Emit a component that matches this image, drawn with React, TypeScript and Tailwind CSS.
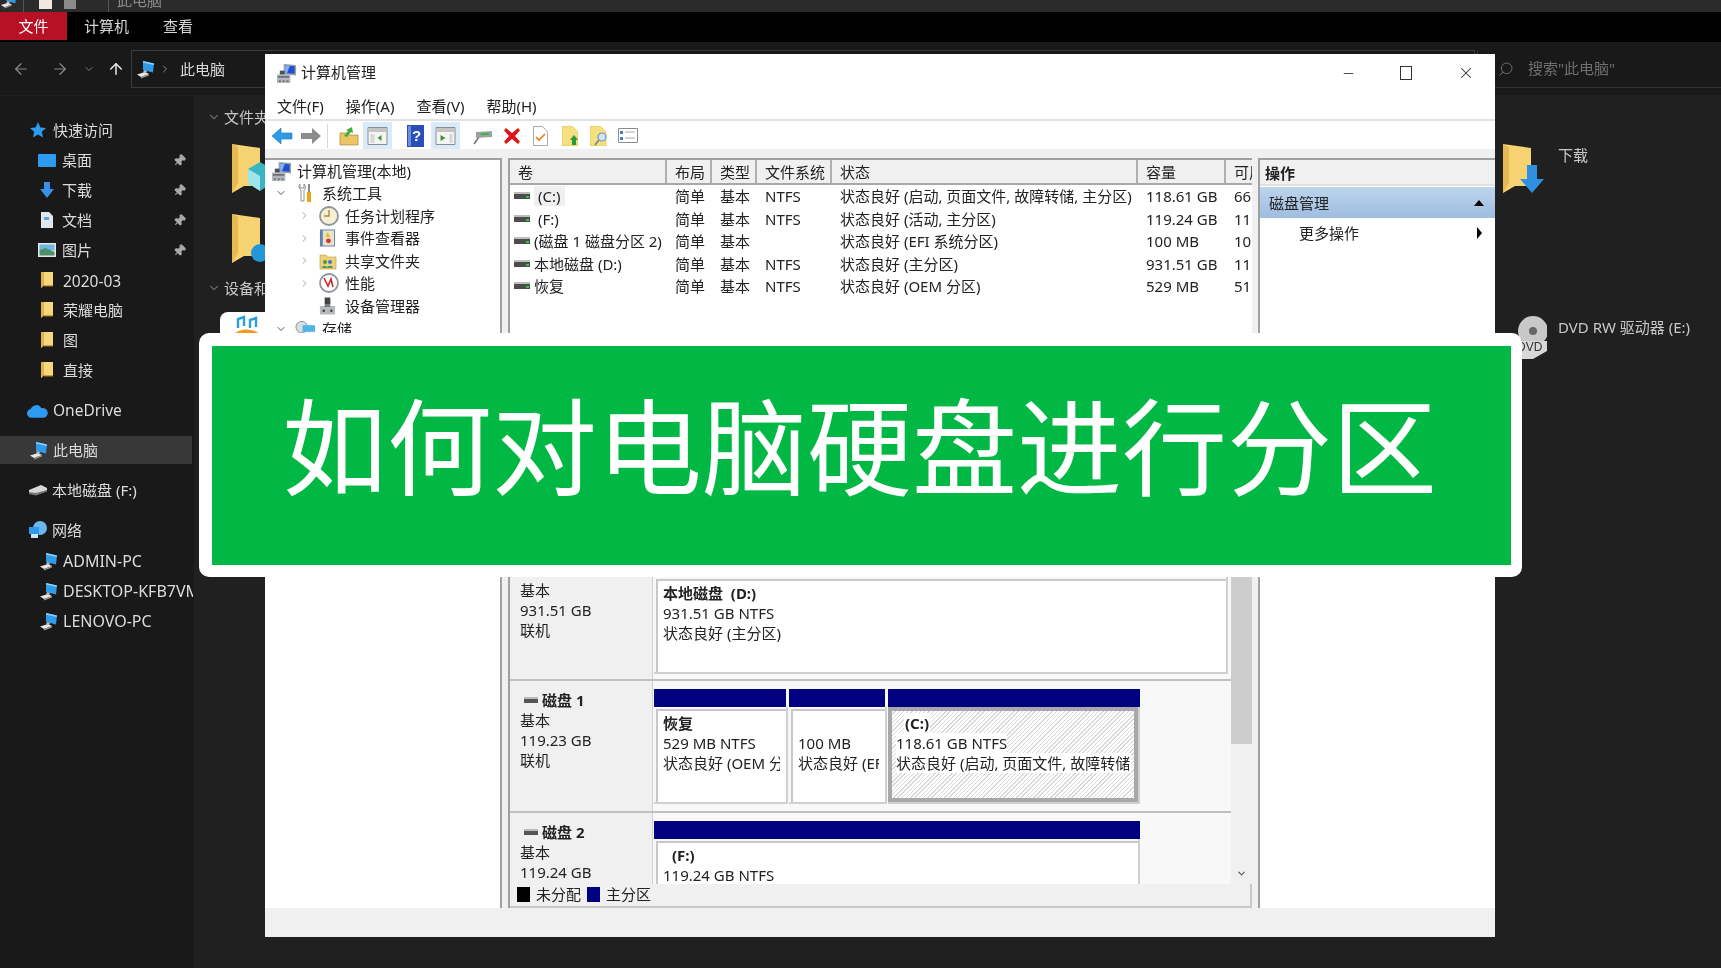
import { ChevronDown, ChevronRight, ArrowLeft, ArrowRight, ArrowUp, Search, Pin, Minus, X } from 'lucide-react'

const ThisPc = ({ className = 'w-[20px] h-[20px]' }: { className?: string }) => (
  <svg viewBox="0 0 20 20" className={className}>
    <path d="M7 2l11 2.5-1 9L7 11z" fill="#2f9be8" />
    <path d="M7 2l11 2.5-.3 1.5L7 3.6z" fill="#8fd0f8" />
    <path d="M1 15.5l8-2.5 4 2-8 3z" fill="#e8e8e8" />
    <path d="M5 18l8-3v1.4L5 19.5z" fill="#9a9a9a" />
    <path d="M8 11l-1 2.4 3 .6 1-2z" fill="#bbb" />
  </svg>
)

const SmallFolder = () => (
  <svg viewBox="0 0 14 18" className="w-[14px] h-[18px]">
    <path d="M1 1h12v13H4l-3 3z" fill="#f7d67c" />
    <path d="M1 1h3v13l-3 3z" fill="#e0b24e" />
    <path d="M4 14h9v1.4H4z" fill="#c99a3c" />
  </svg>
)

const BigFolder = ({ badge }: { badge: 'cube' | 'music' | 'down' }) => (
  <svg viewBox="0 0 48 52" className="w-[48px] h-[52px] shrink-0">
    <path d="M2 1l28 4v38H14L2 50z" fill="#f6d372" />
    <path d="M2 1l6 3v36l-6 10z" fill="#e7b955" />
    {badge === 'cube' && <path d="M18 26l12-7 12 7v14l-12 8-12-8z" fill="#38b6c4" />}
    {badge === 'cube' && <path d="M18 26l12 7v15l-12-8z" fill="#9fe4ea" />}
    {badge === 'music' && <circle cx="30" cy="40" r="9" fill="#2596d8" />}
    {badge === 'down' && <path d="M26 22h10v14h7L31 50 19 36h7z" fill="#2f8fe0" />}
  </svg>
)

const Drive = () => (
  <svg viewBox="0 0 16 8" className="w-[16px] h-[8px] shrink-0">
    <path d="M0 1h16v6H0z" fill="#4c4c4c" />
    <path d="M0 0h16v2H0z" fill="#bdbdbd" />
    <path d="M12 4h3v2h-3z" fill="#3cc43c" />
  </svg>
)

const MgmtIcon = () => (
  <svg viewBox="0 0 22 22" className="w-[21px] h-[21px] shrink-0">
    <path d="M8 1l13 1v11l-13-1z" fill="#9aa0a8" />
    <path d="M9.5 2.5l10 .8v8l-10-.8z" fill="#1f4fd0" />
    <path d="M9.5 2.5l5 .4-3 8-2-.2z" fill="#7fb0f0" />
    <path d="M1 12h14v9H1z" fill="#b4b8bc" />
    <path d="M2 13.5h12v2H2zM3 18h2v2H3zM7 18h2v2H7zM11 18h2v2h-2z" fill="#6b7075" />
    <path d="M4 8h5v4H4z" fill="#4a5058" />
  </svg>
)

const ToolsIcon = () => (
  <svg viewBox="0 0 16 20" className="w-[16px] h-[20px] shrink-0">
    <path d="M3 1C1 3 2 6 4 7v11h3V7c2-1 2-4 0-6v4H3z" fill="#fff" stroke="#777" strokeWidth="0.8" />
    <path d="M11 1h2v8h-2z" fill="#888" />
    <path d="M10 9h4v10h-4z" fill="#eaa515" />
  </svg>
)

const ClockIcon = () => (
  <svg viewBox="0 0 20 20" className="w-[20px] h-[20px] shrink-0">
    <circle cx="10" cy="10" r="9" fill="#f5efd5" stroke="#8f959b" strokeWidth="1.8" />
    <path d="M10 4v6H5" fill="none" stroke="#b08a30" strokeWidth="1.4" />
  </svg>
)

const EventIcon = () => (
  <svg viewBox="0 0 18 20" className="w-[17px] h-[20px] shrink-0">
    <path d="M1 1h16v18H1z" fill="#5f7fb0" />
    <path d="M4 2h12v16H4z" fill="#e8e2c8" />
    <path d="M9 4l3 5H7z" fill="#e8b820" />
    <circle cx="10" cy="13" r="2.6" fill="#d0343a" />
  </svg>
)

const ShareIcon = () => (
  <svg viewBox="0 0 18 18" className="w-[18px] h-[18px] shrink-0">
    <path d="M1 3h6l1 2h9v12H1z" fill="#efd078" stroke="#b99840" strokeWidth="0.6" />
    <circle cx="6" cy="10" r="2" fill="#3e9a4a" />
    <circle cx="11" cy="10" r="2" fill="#3f78c8" />
    <path d="M3 16c0-3 5-3 5 0zM8 16c0-3 6-3 6 0z" fill="#4a9a5a" />
  </svg>
)

const PerfIcon = () => (
  <svg viewBox="0 0 20 20" className="w-[20px] h-[20px] shrink-0">
    <circle cx="10" cy="10" r="9" fill="#fff" stroke="#8f959b" strokeWidth="1.8" />
    <path d="M5 5l4 8 3-7 2 8" fill="none" stroke="#d02828" strokeWidth="1.6" />
  </svg>
)

const DeviceIcon = () => (
  <svg viewBox="0 0 18 20" className="w-[17px] h-[20px] shrink-0">
    <path d="M6 1h6v7H6z" fill="#444" />
    <path d="M1 10h16v9H1z" fill="#b6babd" />
    <path d="M6 8h6v3H6z" fill="#777" />
    <circle cx="5" cy="15" r="1.4" fill="#444" />
    <circle cx="13" cy="15" r="1.4" fill="#444" />
  </svg>
)

const StoreIcon = () => (
  <svg viewBox="0 0 22 18" className="w-[21px] h-[18px] shrink-0">
    <circle cx="7" cy="7" r="6" fill="#d8dde0" stroke="#8a9096" />
    <path d="M8 5h13v7H8z" fill="#4fb5e8" />
    <path d="M2 13h14v5H2z" fill="#b0b4b8" />
  </svg>
)

function Explorer() {
  const sideText = 'text-[15px] text-[#dcdcdc]'
  const pinned = [
    { name: '桌面', icon: <span className="w-[18px] h-[13px] bg-[#2d9bf0] rounded-[1px]" /> },
    { name: '下载', icon: <svg viewBox="0 0 16 18" className="w-[16px] h-[18px]"><path d="M5 1h6v7h4l-7 9-7-9h4z" fill="#3a90e8" /></svg> },
    { name: '文档', icon: <svg viewBox="0 0 14 18" className="w-[14px] h-[18px]"><path d="M1 1h8l4 4v12H1z" fill="#dfe6ec" /><path d="M4 6h5v3H4z" fill="#5aa8e0" /></svg> },
    { name: '图片', icon: <svg viewBox="0 0 18 14" className="w-[18px] h-[14px]"><path d="M0 0h18v14H0z" fill="#e6e6e6" /><path d="M1.5 1.5h15v6h-15z" fill="#6fb6e6" /><path d="M1.5 7l6-2 9 4v3.5h-15z" fill="#4f8f6a" /></svg> },
  ]
  return (
    <div className="absolute inset-0 flex flex-col bg-[#191919]">
      <div className="h-[12px] bg-[#2b2b2b] overflow-hidden flex items-start shrink-0">
        <ThisPc className="w-[18px] h-[18px] -mt-[9px] shrink-0" />
        <span className="w-[1px] h-[12px] bg-[#555] ml-[5px]" />
        <span className="w-[13px] h-[9px] bg-[#f0e8e0] ml-[15px]" />
        <span className="w-[12px] h-[9px] bg-[#8a8a8a] ml-[12px]" />
        <span className="w-[1px] h-[12px] bg-[#555] ml-[32px]" />
        <span className="text-[15px] leading-[20px] text-[#8a8a8a] ml-[8px] -mt-[10px]">此电脑</span>
      </div>
      <div className="h-[30px] bg-black flex text-[15px] text-[#d8d8d8] shrink-0">
        <div className="w-[67px] h-[28px] pt-[1px] bg-[#b81024] text-white flex items-center justify-center">文件</div>
        <div className="ml-[17px] h-[28px] pt-[1px] flex items-center">计算机</div>
        <div className="ml-[34px] h-[28px] pt-[1px] flex items-center">查看</div>
      </div>
      <div className="h-[54px] flex items-start shrink-0 border-b border-[#202020]">
        <div className="flex items-center h-[38px] mt-[8px] text-[#8a8a8a]">
          <ArrowLeft className="ml-[12px] w-[18px] h-[18px]" strokeWidth={1.6} />
          <ArrowRight className="ml-[21px] w-[18px] h-[18px]" strokeWidth={1.6} />
          <ChevronDown className="ml-[14px] w-[12px] h-[12px]" strokeWidth={1.8} />
          <ArrowUp className="ml-[12px] w-[18px] h-[18px] text-[#e8e8e8]" strokeWidth={2} />
        </div>
        <div className="ml-[6px] mt-[8px] h-[38px] flex-1 border border-[#3a3a3a] flex items-center pl-[4px] text-[15px] text-[#d8d8d8]">
          <ThisPc />
          <ChevronRight className="ml-[3px] w-[12px] h-[12px] text-[#888]" />
          <span className="ml-[9px]">此电脑</span>
        </div>
        <div className="ml-[2px] mt-[8px] w-[244px] h-[38px] border-l border-b border-[#333] flex items-center pl-[20px] text-[15px] text-[#6e6e6e]">
          <Search className="w-[16px] h-[16px] -scale-x-100" strokeWidth={1.5} />
          <span className="ml-[14px]">搜索"此电脑"</span>
        </div>
      </div>
      <div className="flex-1 flex min-h-0">
        <div className={`w-[194px] shrink-0 pt-[19px] flex flex-col ${sideText}`}>
          <div className="h-[30px] flex items-center pl-[30px] gap-[7px]">
            <svg viewBox="0 0 16 16" className="w-[16px] h-[16px]"><path d="M8 0l2.4 5.4 5.6.6-4.2 3.8 1.200 5.7L8 12.6 3 15.5l1.2-5.7L0 6l5.6-.6z" fill="#2d9bf0" /></svg>
            快速访问
          </div>
          {pinned.map((p) => (
            <div key={p.name} className="h-[30px] flex items-center pl-[38px] pr-[8px]">
              <span className="w-[24px] flex justify-center -ml-[3px] mr-[3px]">{p.icon}</span>
              <span className="flex-1">{p.name}</span>
              <Pin className="w-[13px] h-[13px] text-[#aaa] rotate-45" fill="#aaa" />
            </div>
          ))}
          {['2020-03', '荣耀电脑', '图', '直接'].map((name) => (
            <div key={name} className="h-[30px] flex items-center pl-[40px] gap-[9px]">
              <SmallFolder />
              <span className={name === '2020-03' ? 'text-[15.500px] pt-[3px]' : ''}>{name}</span>
            </div>
          ))}
          <div className="h-[30px] mt-[10px] pt-[1px] flex items-center pl-[27px] gap-[5px]">
            <svg viewBox="0 0 22 14" className="w-[21px] h-[14px]"><path d="M5 14a4.5 4.5 0 0 1-1-9 6 6 0 0 1 11-1 5 5 0 0 1 3 10z" fill="#2d9bf0" /></svg>
            <span className="text-[15.500px]">OneDrive</span>
          </div>
          <div className="h-[28px] w-[192px] mt-[11px] mb-[1px] flex items-center pl-[29px] gap-[4px] bg-[#383838]">
            <ThisPc />
            此电脑
          </div>
          <div className="h-[30px] mt-[10px] flex items-center pl-[28px] gap-[4px]">
            <svg viewBox="0 0 20 12" className="w-[20px] h-[12px]"><path d="M1 6l12-5 6 3v3L8 11 1 9z" fill="#d8d8d8" /><path d="M1 8l7 1 11-3v1.500L8 11.5 1 10z" fill="#777" /></svg>
            本地磁盘 (F:)
          </div>
          <div className="h-[30px] mt-[10px] flex items-center pl-[28px] gap-[4px]">
            <svg viewBox="0 0 20 20" className="w-[20px] h-[20px]"><circle cx="12" cy="8" r="7" fill="#6bb8ec" /><path d="M1 7h10v7H1z" fill="#2d9bf0" /><path d="M3 14h7v4H3z" fill="#cfe6f6" /></svg>
            网络
          </div>
          {['ADMIN-PC', 'DESKTOP-KFB7VM', 'LENOVO-PC'].map((name) => (
            <div key={name} className="h-[30px] pt-[1px] flex items-center pl-[39px] gap-[4px] whitespace-nowrap overflow-hidden w-[193px] text-[16px]">
              <ThisPc className="w-[20px] h-[20px] shrink-0" />
              {name}
            </div>
          ))}
        </div>
        <div className="flex-1 bg-[#202020] flex justify-between text-[15px] text-[#c8c8c8]">
          <div className="pl-[13px] pt-[11px]">
            <div className="flex items-center gap-[3px] h-[20px]">
              <ChevronDown className="w-[14px] h-[14px] text-[#666]" />
              文件夹
            </div>
            <div className="ml-[23px] mt-[16px]"><BigFolder badge="cube" /></div>
            <div className="ml-[23px] mt-[18px]"><BigFolder badge="music" /></div>
            <div className="flex items-center gap-[3px] h-[20px] mt-[13px]">
              <ChevronDown className="w-[14px] h-[14px] text-[#666]" />
              设备和
            </div>
            <div className="ml-[13px] mt-[14px] w-[60px] h-[30px] bg-white rounded-[8px] overflow-hidden pl-[10px] pt-[2px]">
              <svg viewBox="0 0 34 24" className="w-[34px] h-[24px]"><path d="M4 20c6-6 18-6 26 0z" fill="#f09a20" /><path d="M8 14V5l6-2v9M20 14V6l6-2v9" fill="none" stroke="#2d9be0" strokeWidth="2.4" /></svg>
            </div>
          </div>
          <div className="w-[218px] pt-[47px] text-[15px]">
            <div className="flex gap-[9px] -ml-[2px]">
              <BigFolder badge="down" />
              <span className="mt-[1px]">下载</span>
            </div>
            <div className="flex mt-[120px] gap-[11px] pl-[12px]">
              <svg viewBox="0 0 32 46" className="w-[32px] h-[46px] shrink-0">
                <circle cx="18" cy="16" r="15" fill="#c8c8c8" />
                <circle cx="18" cy="16" r="4" fill="#666" />
                <path d="M0 26h32v10l-14 8H4z" fill="#d8d8d8" />
                <text x="2" y="36" fontSize="12" fill="#333" fontFamily="Liberation Sans">DVD</text>
              </svg>
              <span className="mt-[1px] whitespace-nowrap">DVD RW 驱动器 (E:)</span>
            </div>
          </div>
        </div>
      </div>
    </div>
  )
}

const ToolBtn = ({ active, children }: { active?: boolean; children: React.ReactNode }) => (
  <div className={`w-[29px] h-[27px] flex items-center justify-center shrink-0 ${active ? 'bg-[#d9ebf9]' : ''}`}>{children}</div>
)

function Toolbar() {
  return (
    <div className="h-[28px] flex items-center pl-[2px] pt-[1px] shrink-0">
      <ToolBtn>
        <svg viewBox="0 0 22 18" className="w-[22px] h-[18px]"><path d="M10 1v5h11v6H10v5L1 9z" fill="#2f9be8" stroke="#1a6fb8" strokeWidth="0.6" /></svg>
      </ToolBtn>
      <ToolBtn>
        <svg viewBox="0 0 22 18" className="w-[22px] h-[18px]"><path d="M12 1v5H1v6h11v5l9-8z" fill="#8b8b8b" /></svg>
      </ToolBtn>
      <div className="w-[1px] h-[24px] bg-[#d8d8d8] mx-[2px]" />
      <div className="w-[4px]" />
      <ToolBtn>
        <svg viewBox="0 0 20 20" className="w-[20px] h-[20px]"><path d="M1 7h7l2 2h9v10H1z" fill="#ecc565" stroke="#a88a36" strokeWidth="0.7" /><path d="M5 10l4-5-2-1 6-3 1 6-2-1-4 5z" fill="#3fae3a" /></svg>
      </ToolBtn>
      <ToolBtn active>
        <svg viewBox="0 0 20 18" className="w-[21px] h-[18px]"><path d="M.5.5h19v17H.5z" fill="#f4f4f4" stroke="#8c8c8c" /><path d="M1 1h18v4H1z" fill="#c4c4c4" /><path d="M3 7h4v9H3z" fill="#d8d8d8" /><path d="M14 8v6l-4-3z" fill="#3a9a3a" /></svg>
      </ToolBtn>
      <div className="w-[9px]" />
      <ToolBtn>
        <svg viewBox="0 0 17 22" className="w-[17px] h-[22px]"><path d="M0 0h17v22H0z" fill="#2a4fb8" /><path d="M1 1h3v20H1z" fill="#6f8ee0" /><text x="5" y="16" fontSize="15" fontWeight="bold" fill="#fff" fontFamily="Liberation Sans">?</text></svg>
      </ToolBtn>
      <div className="w-[1px]" />
      <ToolBtn active>
        <svg viewBox="0 0 20 18" className="w-[21px] h-[18px]"><path d="M.5.5h19v17H.5z" fill="#f4f4f4" stroke="#8c8c8c" /><path d="M1 1h18v4H1z" fill="#c4c4c4" /><path d="M14 7h3v9h-3z" fill="#d8d8d8" /><path d="M5 8v6l5-3z" fill="#3a9a3a" /></svg>
      </ToolBtn>
      <div className="w-[8px]" />
      <ToolBtn>
        <svg viewBox="0 0 20 18" className="w-[20px] h-[18px]"><path d="M1 17l5-7" stroke="#777" strokeWidth="1.6" /><path d="M3 5l16-1v6L3 11z" fill="#9aa0a6" /><path d="M8 6h8v2H8z" fill="#3cbc3c" /></svg>
      </ToolBtn>
      <ToolBtn>
        <svg viewBox="0 0 18 18" className="w-[18px] h-[18px]"><path d="M3 1l6 5 6-5 2 2.5L12 9l5 5.5-2 2.5-6-5-6 5-2-2.5L6 9 1 3.500z" fill="#d8181e" /></svg>
      </ToolBtn>
      <ToolBtn>
        <svg viewBox="0 0 15 20" className="w-[15px] h-[20px]"><path d="M.5.5h9l5 5v14H.5z" fill="#fff" stroke="#aaa" /><path d="M3 11l3 3 6-6" fill="none" stroke="#ea7a28" strokeWidth="1.6" /></svg>
      </ToolBtn>
      <ToolBtn>
        <svg viewBox="0 0 16 20" className="w-[16px] h-[20px]"><path d="M0 0h10l6 6v14H0z" fill="#f5df7e" stroke="#d4b850" strokeWidth="0.6" /><path d="M12 9l4 5h-2v5h-4v-5H8z" fill="#2c9a3a" /></svg>
      </ToolBtn>
      <ToolBtn>
        <svg viewBox="0 0 18 20" className="w-[18px] h-[20px]"><path d="M0 0h10l6 6v14H0z" fill="#f5df7e" stroke="#d4b850" strokeWidth="0.6" /><circle cx="12" cy="11" r="4" fill="#cfe4f4" stroke="#6a98c0" strokeWidth="1.2" /><path d="M9 14l-4 5" stroke="#888" strokeWidth="2" /></svg>
      </ToolBtn>
      <ToolBtn>
        <svg viewBox="0 0 20 15" className="w-[20px] h-[15px]"><path d="M.5.5h19v14H.5z" fill="#fff" stroke="#8c8c8c" /><path d="M2 3h3v3H2zM2 9h3v3H2z" fill="#3a80d0" /><path d="M7 4h10M7 10h10" stroke="#aaa" /></svg>
      </ToolBtn>
    </div>
  )
}

function Tree() {
  const items = [
    { name: '任务计划程序', icon: <ClockIcon />, arrow: true },
    { name: '事件查看器', icon: <EventIcon />, arrow: true },
    { name: '共享文件夹', icon: <ShareIcon />, arrow: true },
    { name: '性能', icon: <PerfIcon />, arrow: true },
    { name: '设备管理器', icon: <DeviceIcon />, arrow: false },
  ]
  return (
    <div className="w-[237px] shrink-0 border-t-2 border-r-2 border-[#a0a0a0] pl-[6px] text-[15px] text-[#222]">
      <div className="h-[22px] flex items-center gap-[5px]"><MgmtIcon />计算机管理(本地)</div>
      <div className="h-[22.500px] flex items-center">
        <ChevronDown className="w-[12px] h-[12px] text-[#555] ml-[4px] mr-[10px]" />
        <ToolsIcon />
        <span className="ml-[9px]">系统工具</span>
      </div>
      {items.map((it) => (
        <div key={it.name} className="h-[22.500px] flex items-center">
          <span className="w-[28px]" />
          <span className="w-[20px] flex">
            {it.arrow && <ChevronRight className="w-[11px] h-[11px] text-[#999]" />}
          </span>
          <span className="w-[26px] flex justify-start">{it.icon}</span>
          <span>{it.name}</span>
        </div>
      ))}
      <div className="h-[23px] flex items-center">
        <ChevronDown className="w-[12px] h-[12px] text-[#555] ml-[4px] mr-[8px]" />
        <StoreIcon />
        <span className="ml-[6px]">存储</span>
      </div>
    </div>
  )
}

const colW = ['w-[157px]', 'w-[45px]', 'w-[45px]', 'w-[75px]', 'w-[306px]', 'w-[88px]', 'w-[26px]']

const rows = [
  ['(C:)', '简单', '基本', 'NTFS', '状态良好 (启动, 页面文件, 故障转储, 主分区)', '118.61 GB', '66'],
  ['(F:)', '简单', '基本', 'NTFS', '状态良好 (活动, 主分区)', '119.24 GB', '11'],
  ['(磁盘 1 磁盘分区 2)', '简单', '基本', '', '状态良好 (EFI 系统分区)', '100 MB', '10'],
  ['本地磁盘 (D:)', '简单', '基本', 'NTFS', '状态良好 (主分区)', '931.51 GB', '11'],
  ['恢复', '简单', '基本', 'NTFS', '状态良好 (OEM 分区)', '529 MB', '51'],
]

function VolumeTable() {
  const head = ['卷', '布局', '类型', '文件系统', '状态', '容量', '可用']
  return (
    <div className="flex-1 min-h-0 overflow-hidden">
      <div className="h-[25px] flex bg-[#f0f0f0] border-b-2 border-[#a8a8a8]">
        {head.map((h, i) => (
          <div key={h} className={`${colW[i]} shrink-0 pl-[8px] overflow-hidden whitespace-nowrap flex items-center ${i < 6 ? 'border-r-2 border-[#b0b0b0]' : ''}`}>{h}</div>
        ))}
      </div>
      {rows.map((r, ri) => (
        <div key={ri} className="h-[22.500px] flex items-center">
          {r.map((c, i) => (
            <div key={i} className={`${colW[i]} shrink-0 overflow-hidden whitespace-nowrap ${i === 0 ? 'pl-[4px] flex items-center' : 'pl-[8px]'}`}>
              {i === 0 && <Drive />}
              {i === 0 ? (
                <span className={`${ri < 2 ? 'ml-[4px] px-[4px]' : 'ml-[4px]'} ${ri === 0 ? 'bg-[#f0f0f0]' : ''}`}>{c}</span>
              ) : (
                c
              )}
            </div>
          ))}
        </div>
      ))}
    </div>
  )
}

const Part = ({ name, lines, className, hatch }: { name: string; lines: string[]; className: string; hatch?: boolean }) => (
  <div className={`${className} overflow-hidden border-r-2 border-b-2 border-[#d0d0d0]`}>
    {hatch ? (
      <div className="h-full border-4 border-[#a8a8a8] pl-[4px] pr-[3px] pt-[2px] bg-[repeating-linear-gradient(135deg,#ffffff_0px,#ffffff_2px,#d8d8d8_2px,#d8d8d8_3px)]">
        <div className="h-full whitespace-nowrap overflow-hidden">
          <div className="h-[20px] font-bold pl-[8px]"><span className="bg-white px-[1px]">{name}</span></div>
          {lines.map((l) => <div key={l} className="h-[20px]"><span className="bg-white">{l}</span></div>)}
        </div>
      </div>
    ) : (
      <div className="h-full border-l-2 border-t-2 border-[#c8c8c8] ml-[2px] mt-[2px] pl-[5px] pr-[6px] pt-[2px] bg-white">
        <div className="h-full whitespace-nowrap overflow-hidden">
          {name ? <div className={`h-[20px] font-bold ${name.startsWith('(') ? 'pl-[9px]' : ''}`}>{name}</div> : <div className="h-[20px]" />}
          {lines.map((l) => <div key={l} className="h-[20px]">{l}</div>)}
        </div>
      </div>
    )}
  </div>
)

const DiskLabel = ({ title, lines }: { title?: string; lines: string[] }) => (
  <div className="w-[143px] shrink-0 bg-[#f0f0f0] border-r border-[#d0d0d0] pl-[10px] pt-[9px]">
    {title && (
      <div className="h-[20px] flex items-center font-bold gap-[4px]">
        <span className="ml-[4px] w-[14px] h-[6px] bg-[#555] border-t-2 border-[#bbb]" />
        {title}
      </div>
    )}
    {lines.map((l) => <div key={l} className="h-[20px] flex items-center">{l}</div>)}
  </div>
)

function GraphPane() {
  return (
    <div className="h-[340px] shrink-0 flex overflow-hidden">
      <div className="flex-1 min-w-0 flex flex-col bg-[#f8f8f8]">
        <div className="h-[137px] shrink-0 flex border-b-2 border-[#c0c0c0]">
          <div className="w-[143px] shrink-0 bg-[#f0f0f0] border-r border-[#d0d0d0] pl-[10px] pt-[36px]">
            <div className="h-[20px] flex items-center">基本</div>
            <div className="h-[20px] flex items-center">931.51 GB</div>
            <div className="h-[20px] flex items-center">联机</div>
          </div>
          <div className="flex-1 pt-[33px] pl-[1px] pr-[3px] pb-[5px]">
            <Part name={'本地磁盘\u00a0\u00a0(D:)'} lines={['931.51 GB NTFS', '状态良好 (主分区)']} className="h-full w-full" />
          </div>
        </div>
        <div className="h-[132px] shrink-0 flex border-b-2 border-[#c0c0c0]">
          <DiskLabel title="磁盘 1" lines={['基本', '119.23 GB', '联机']} />
          <div className="pl-[1px] pt-[8px] flex flex-col">
            <div className="flex gap-[3px] h-[18px] w-[486px] shrink-0">
              <div className="w-[132px] bg-[#000080]" />
              <div className="w-[96px] bg-[#000080]" />
              <div className="flex-1 bg-[#000080]" />
            </div>
            <div className="flex gap-[1px] h-[97px] w-[486px] shrink-0">
              <Part name="恢复" lines={['529 MB NTFS', '状态良好 (OEM 分区)']} className="w-[134px]" />
              <Part name="" lines={['100 MB', '状态良好 (EFI 系统分区)']} className="w-[98px]" />
              <Part name="(C:)" lines={['118.61 GB NTFS', '状态良好 (启动, 页面文件, 故障转储, 主分区)']} className="flex-1" hatch />
            </div>
          </div>
        </div>
        <div className="flex-1 min-h-0 flex overflow-hidden">
          <DiskLabel title="磁盘 2" lines={['基本', '119.24 GB', '联机']} />
          <div className="pl-[1px] pt-[8px] flex flex-col">
            <div className="h-[18px] w-[486px] bg-[#000080] shrink-0" />
            <div className="h-[98px] w-[486px] shrink-0">
              <Part name="(F:)" lines={['119.24 GB NTFS', '状态良好 (活动, 主分区)']} className="h-full w-full" />
            </div>
          </div>
        </div>
      </div>
      <div className="w-[21px] shrink-0 bg-[#f0f0f0] flex flex-col">
        <div className="h-[200px] bg-[#cdcdcd]" />
        <div className="flex-1 flex items-end justify-center pb-[5px]">
          <ChevronDown className="w-[11px] h-[11px] text-[#555]" strokeWidth={2.4} />
        </div>
      </div>
    </div>
  )
}

function ActionPane() {
  return (
    <div className="flex-1 border-t-2 border-l-2 border-[#a0a0a0]">
      <div className="h-[26px] bg-[#f0f0f0] pl-[5px] pt-[2px] flex items-center font-bold border-b-2 border-[#e0e0e0]">操作</div>
      <div className="h-[31px] mt-[1px] bg-gradient-to-b from-[#bdd4ec] to-[#9fbde0] flex items-center justify-between pl-[9px] pr-[11px]">
        磁盘管理
        <span className="w-0 h-0 border-x-[5px] border-x-transparent border-b-[6px] border-b-black" />
      </div>
      <div className="h-[29px] flex items-center justify-between pl-[39px] pr-[13px]">
        更多操作
        <span className="w-0 h-0 border-y-[6px] border-y-transparent border-l-[5px] border-l-black" />
      </div>
    </div>
  )
}

function Window() {
  return (
    <div className="absolute left-[265px] top-[54px] w-[1230px] h-[883px] bg-white flex flex-col text-[15px] leading-[20px] text-[#222]">
      <div className="h-[38px] shrink-0 flex items-center pl-[11px]">
        <MgmtIcon />
        <span className="ml-[4px] flex-1 -mt-[2px]">计算机管理</span>
        <Minus className="w-[15px] h-[15px] text-[#333] mr-[44px]" strokeWidth={1.4} />
        <span className="w-[12px] h-[14px] border-[1.500px] border-[#333] mr-[45px]" />
        <X className="w-[18px] h-[18px] text-[#333] mr-[20px]" strokeWidth={1.4} />
      </div>
      <div className="h-[29px] shrink-0 flex items-center gap-[22px] pl-[12px] border-b-2 border-[#e2e2e2]">
        <span>文件(F)</span>
        <span>操作(A)</span>
        <span>查看(V)</span>
        <span>帮助(H)</span>
      </div>
      <Toolbar />
      <div className="h-[9px] shrink-0 bg-[#f0f0f0]" />
      <div className="flex-1 min-h-0 flex">
        <Tree />
        <div className="w-[6px] bg-[#f0f0f0] shrink-0" />
        <div className="w-[744px] shrink-0 flex flex-col border-t-2 border-l-2 border-[#a0a0a0]">
          <VolumeTable />
          <GraphPane />
          <div className="h-[24px] shrink-0 bg-[#f0f0f0] border-r-2 border-b-2 border-[#c8c8c8] flex items-center pl-[7px] pb-[2px]">
            <span className="w-[13px] h-[15px] bg-black" />
            <span className="ml-[6px]">未分配</span>
            <span className="w-[13px] h-[15px] bg-[#000080] ml-[6px]" />
            <span className="ml-[6px]">主分区</span>
          </div>
        </div>
        <div className="w-[6px] bg-[#f0f0f0] shrink-0" />
        <ActionPane />
      </div>
      <div className="h-[29px] shrink-0 bg-[#f0f0f0]" />
    </div>
  )
}

export default function App() {
  return (
    <div className="relative w-[1721px] h-[968px] overflow-hidden bg-[#202020] font-['Noto_Sans','Noto_Sans_CJK_SC',sans-serif]">
      <div className="absolute inset-0 blur-[0.5px]">
        <Explorer />
        <Window />
        <div className="absolute left-[199px] top-[333px] w-[1323px] h-[244px] bg-white rounded-[10px] p-[13px] pb-[12px] pr-[11px]">
          <div className="w-full h-full pb-[28px] pr-[4px] bg-[#00b843] flex items-center justify-center text-white text-[105px] leading-none whitespace-nowrap font-['Noto_Sans_CJK_SC',sans-serif] font-normal">
            如何对电脑硬盘进行分区
          </div>
        </div>
      </div>
    </div>
  )
}
